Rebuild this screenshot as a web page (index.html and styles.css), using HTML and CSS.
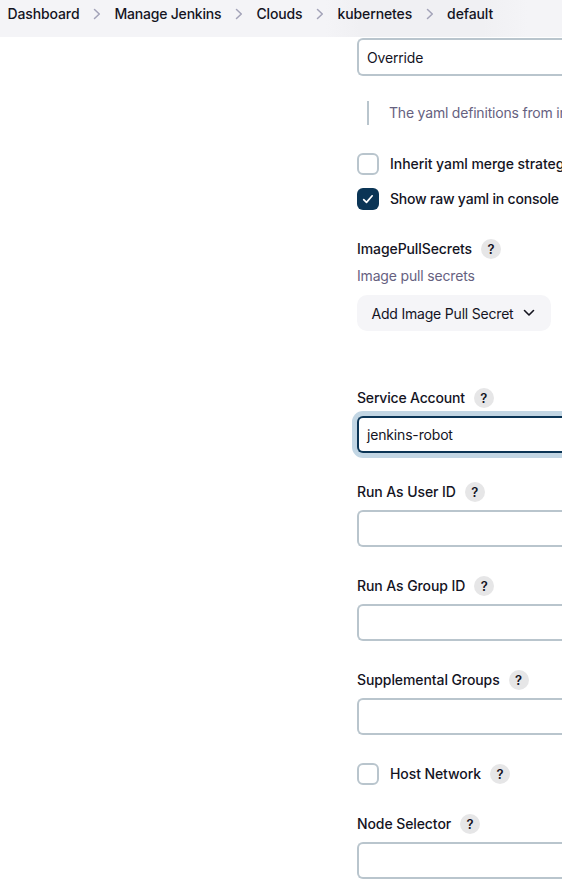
FILE: index.html
```html
<!DOCTYPE html>
<html lang="en">
<head>
<meta charset="utf-8">
<title>default - Jenkins</title>
<link rel="stylesheet" href="styles.css">
</head>
<body>
<nav class="breadcrumbs">
  <span class="crumb">Dashboard</span>
  <svg class="sep" viewBox="0 0 8 12"><path d="M1.5 1.5 6.3 6 1.5 10.5"/></svg>
  <span class="crumb wide">Manage Jenkins</span>
  <svg class="sep" viewBox="0 0 8 12"><path d="M1.5 1.5 6.3 6 1.5 10.5"/></svg>
  <span class="crumb">Clouds</span>
  <svg class="sep" viewBox="0 0 8 12"><path d="M1.5 1.5 6.3 6 1.5 10.5"/></svg>
  <span class="crumb">kubernetes</span>
  <svg class="sep" viewBox="0 0 8 12"><path d="M1.5 1.5 6.3 6 1.5 10.5"/></svg>
  <span class="crumb">default</span>
</nav>
<main class="form">
  <div class="input select">Override</div>
  <div class="quote">The yaml definitions from inherited pod templates</div>
  <div class="check"><span class="box"></span><span class="label inherit">Inherit yaml merge strategy</span></div>
  <div class="check"><span class="box checked"><svg viewBox="0 0 22 22"><path d="M6.7 11.7 9.5 14.4 15.2 7.8"/></svg></span><span class="label raw">Show raw yaml in console</span></div>
  <section class="secrets">
    <div class="heading"><span class="label">ImagePullSecrets</span><span class="help">?</span></div>
    <div class="desc">Image pull secrets</div>
    <div class="button"><span>Add Image Pull Secret</span><svg viewBox="0 0 12 8"><path d="M1.5 1.5 6 6 10.5 1.5"/></svg></div>
  </section>
  <section class="field">
    <div class="heading"><span class="label account">Service Account</span><span class="help">?</span></div>
    <div class="input focused">jenkins-robot</div>
  </section>
  <section class="field">
    <div class="heading"><span class="label">Run As User ID</span><span class="help">?</span></div>
    <div class="input"></div>
  </section>
  <section class="field">
    <div class="heading"><span class="label">Run As Group ID</span><span class="help">?</span></div>
    <div class="input"></div>
  </section>
  <section class="field">
    <div class="heading"><span class="label">Supplemental Groups</span><span class="help">?</span></div>
    <div class="input"></div>
  </section>
  <div class="check host"><span class="box"></span><span class="label">Host Network</span><span class="help">?</span></div>
  <section class="field">
    <div class="heading"><span class="label">Node Selector</span><span class="help">?</span></div>
    <div class="input"></div>
  </section>
</main>
</body>
</html>
```
FILE: styles.css
```css
* { box-sizing: border-box; }
html, body { margin: 0; height: 888px; overflow: hidden; }
body {
  background: #fff;
  color: #14141f;
  font: 400 14px/20px Inter, "Liberation Sans", sans-serif;
  letter-spacing: -0.17px;
  white-space: nowrap;
}
svg { display: block; flex: none; fill: none; stroke-linecap: round; stroke-linejoin: round; }

.breadcrumbs {
  display: flex;
  align-items: center;
  height: 37px;
  padding: 0 0 9px 7.5px;
  background: linear-gradient(90deg, #f4f4f7 58%, #f0f0f3 64%, #f0f0f3 86%, #f4f4f7 94%);
  font-weight: 500;
  letter-spacing: -0.12px;
}
.wide { letter-spacing: -0.2px; }
.sep { width: 8px; height: 12px; margin: 0 13.5px; stroke: #a3a3b8; stroke-width: 1.5; }

.form { padding: 1px 0 0 357px; overflow: hidden; }
.input {
  display: flex;
  align-items: center;
  height: 37px;
  padding: 0 8px;
  border: 2px solid #b9c5cd;
  border-right: 0;
  border-radius: 6px 0 0 6px;
  background: #fff;
}
.select { height: 38px; padding-top: 2px; }
.focused { border-color: #0b3556; box-shadow: 0 0 0 5px #c2d6e4; }

.quote {
  height: 24px;
  margin: 25px 0 28px 10px;
  padding-left: 20px;
  border-left: 2px solid #b9c5cd;
  color: #66617f;
  line-height: 24px;
  letter-spacing: -0.2px;
}
.check { display: flex; align-items: center; height: 22px; margin-bottom: 13px; }
.box {
  flex: none;
  width: 22px;
  height: 22px;
  margin-right: 11px;
  border: 2px solid #b9c5cd;
  border-radius: 6px;
}
.checked { border: 0; background: #0b3556; }
.checked svg { width: 22px; height: 22px; stroke: #fff; stroke-width: 1.7; }
.label { font-weight: 500; letter-spacing: -0.09px; }
.account { letter-spacing: -0.18px; }
.raw { letter-spacing: -0.2px; }
.inherit { letter-spacing: -0.05px; }
.help {
  flex: none;
  width: 20px;
  height: 20px;
  margin-left: 9px;
  border-radius: 50%;
  background: #e6e6e7;
  font-size: 13px;
  font-weight: 600;
  letter-spacing: 0;
  text-align: center;
}
.heading { display: flex; align-items: center; height: 20px; }

.secrets { padding-top: 16px; margin-bottom: 57px; }
.desc { margin: 7px 0 9px; color: #66617f; }
.button {
  display: flex;
  align-items: center;
  justify-content: space-between;
  width: 194px;
  height: 36px;
  padding: 1px 16px 0 14.5px;
  border-radius: 10px;
  background: #f5f5f8;
  letter-spacing: -0.2px;
}
.button svg { width: 12px; height: 8px; margin-top: -2px; stroke: #14141f; stroke-width: 1.6; }

.field { margin-bottom: 29px; }
.field .heading { margin-bottom: 8px; }
.host { margin: -1px 0 29px; }
```
